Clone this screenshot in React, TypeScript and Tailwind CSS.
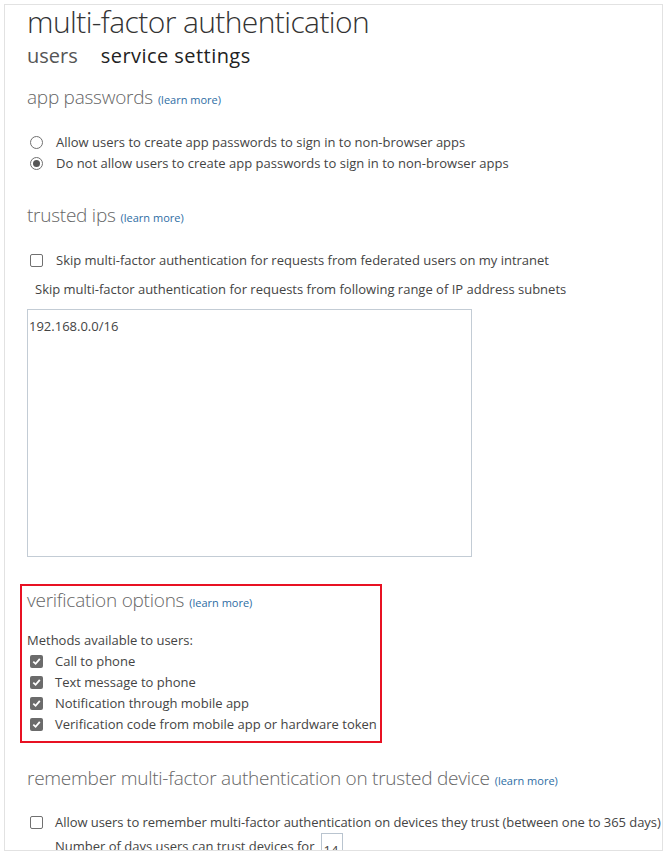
import React from "react";

const LM = () => (
  <span className="text-[11px] font-normal tracking-normal text-[#2e6da4] ml-[5px]">(learn more)</span>
);

const Radio = ({ checked }: { checked?: boolean }) => (
  <span className="w-[13px] h-[13px] rounded-full border border-[#707070] bg-white flex items-center justify-center shrink-0">
    {checked && <span className="w-[7px] h-[7px] rounded-full bg-[#555]" />}
  </span>
);

const Box = ({ checked }: { checked?: boolean }) =>
  checked ? (
    <span className="w-[13px] h-[13px] rounded-[2px] bg-[#6b6b6b] flex items-center justify-center shrink-0">
      <svg width="9" height="9" viewBox="0 0 9 9">
        <path d="M1.3 4.6 L3.6 6.8 L7.8 1.8" fill="none" stroke="white" strokeWidth="1.8" />
      </svg>
    </span>
  ) : (
    <span className="w-[13px] h-[13px] rounded-[2px] border border-[#707070] bg-white shrink-0" />
  );

const H = ({ children, className = "" }: { children: React.ReactNode; className?: string }) => (
  <div className={`text-[19px] font-light text-[#666] leading-[26px] tracking-[-0.25px] whitespace-nowrap ${className}`}>
    {children}
  </div>
);

export default function App() {
  return (
    <div className="bg-white w-[666px] h-[857px] pt-[4px] pl-[4px]" style={{ fontFamily: '"Open Sans", "Noto Sans", sans-serif' }}>
      <div className="w-[659px] h-[847px] border border-[#e2e2e2] overflow-hidden pl-[22px] text-[13px] text-[#444]">
        <h1 className="text-[30px] font-light text-[#333] leading-[34px] tracking-[-0.6px]">multi-factor authentication</h1>
        <div className="flex gap-[23px] text-[20px] leading-[26px] mt-[4px]">
          <span className="text-[#555]">users</span>
          <span className="text-[#222] tracking-[0.45px]">service settings</span>
        </div>

        <H className="mt-[15px]">
          app passwords<LM />
        </H>
        <div className="mt-[19px] pl-[3px] flex flex-col">
          <label className="flex items-center h-[21px]">
            <Radio />
            <span className="ml-[13px]">Allow users to create app passwords to sign in to non-browser apps</span>
          </label>
          <label className="flex items-center h-[21px]">
            <Radio checked />
            <span className="ml-[13px]">Do not allow users to create app passwords to sign in to non-browser apps</span>
          </label>
        </div>

        <H className="mt-[28px]">
          trusted ips<LM />
        </H>
        <label className="mt-[19px] pl-[3px] flex items-center h-[21px]">
          <Box />
          <span className="ml-[13px]">Skip multi-factor authentication for requests from federated users on my intranet</span>
        </label>
        <div className="mt-[8px] pl-[8px] h-[21px] leading-[21px]">
          Skip multi-factor authentication for requests from following range of IP address subnets
        </div>
        <div className="mt-[9px] w-[445px] h-[248px] border border-[#c3ccd5] pl-[1px] pt-[6px] leading-[20px]">
          192.168.0.0/16
        </div>

        <div className="mt-[27px] -ml-[7px] w-[362px] h-[159px] border-2 border-[#e81123] pl-[5px]">
          <H className="mt-[1px]">
            verification options<LM />
          </H>
          <div className="mt-[14px] h-[21px] leading-[21px]">Methods available to users:</div>
          {[
            "Call to phone",
            "Text message to phone",
            "Notification through mobile app",
            "Verification code from mobile app or hardware token",
          ].map((t) => (
            <label key={t} className="pl-[3px] flex items-center h-[21px]">
              <Box checked />
              <span className="ml-[12px]">{t}</span>
            </label>
          ))}
        </div>

        <H className="mt-[22px]">
          remember multi-factor authentication on trusted device<LM />
        </H>
        <label className="mt-[18px] pl-[3px] flex items-center h-[21px] whitespace-nowrap">
          <Box />
          <span className="ml-[12px] tracking-[-0.05px]">Allow users to remember multi-factor authentication on devices they trust (between one to 365 days)</span>
        </label>
        <div className="pl-[28px] flex items-start whitespace-nowrap h-[40px]">
          <span className="mt-[3px] leading-[21px]">Number of days users can trust devices for</span>
          <span className="ml-[6px] w-[22px] h-[30px] border border-[#b9c4cf] pl-[2px] pt-[6px] leading-[20px]">14</span>
        </div>
      </div>
    </div>
  );
}
